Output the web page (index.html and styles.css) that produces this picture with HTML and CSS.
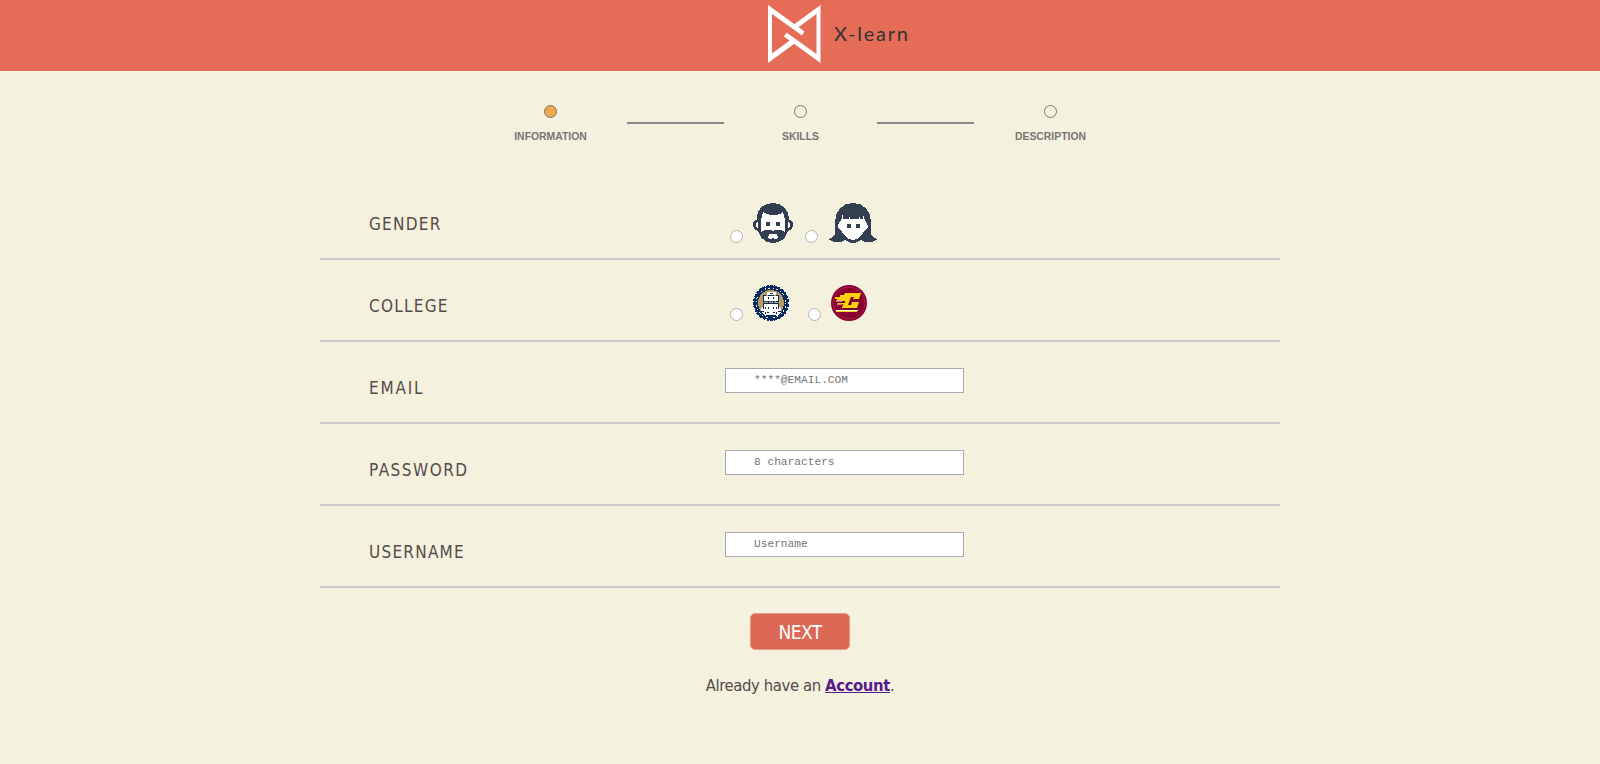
FILE: index.html
```html
<!DOCTYPE html>
<html lang="en">
<head>
<meta charset="utf-8">
<title>X-learn</title>
<link rel="stylesheet" href="styles.css">
</head>
<body>
<header class="header">
  <svg class="logo" width="54" height="58" viewBox="0 0 54 58">
    <path fill="#fff" d="M0 0L36.500 26.500L34 30.500L4 9V48.500L24.500 33.500L28 37.500L0 58ZM52.500 0V58L16 31.500L18.500 27.500L48.500 49V9L28 24L24.500 20.500Z"/>
  </svg>
  <span class="brand">X-learn</span>
</header>
<main class="page">
  <div class="steps">
    <div class="step"><i class="dot active"></i><span>INFORMATION</span></div>
    <i class="bar"></i>
    <div class="step"><i class="dot"></i><span>SKILLS</span></div>
    <i class="bar"></i>
    <div class="step"><i class="dot"></i><span>DESCRIPTION</span></div>
  </div>
  <form class="form">
    <div class="row">
      <span class="label gender">GENDER</span>
      <div class="choices people">
        <i class="radio"></i>
        <svg width="40" height="40" viewBox="0 0 40 40" shape-rendering="crispEdges">
          <path fill="#333e50" d="M20 0C29 0 35 6 36 15L36 17C39 17 40 19 40 22C39 26 38 27 35 28C33 35 28 40 20 40S7 35 5 28C2 27 1 26 0 22C0 19 1 17 4 17C3 7 10 0 20 0Z"/>
          <path fill="#fff" d="M10 9L14 11L20 12.500L27 11L30 9L32 17V29L28 27H22L20 28L18 27H12L8 29V17ZM5 19V26C2 24 2 20 5 19ZM35 19V26C38 24 38 20 35 19ZM16 31H24L25 35Q24 36 22 36L20 35L18 36Q16 36 15 35Z"/>
          <path fill="#333e50" d="M13 19h4v4h-4zM23 19h4v4h-4z"/>
        </svg>
        <i class="radio second"></i>
        <svg width="50" height="40" viewBox="0 0 50 40" shape-rendering="crispEdges">
          <path fill="#333e50" d="M25 0C36 0 43 8 43 19V31Q45 35 50 36Q41 42 33 37Q29 40 25 40T17 37Q9 42 0 36Q5 35 7 31V19C7 8 14 0 25 0Z"/>
          <path fill="#fff" d="M15 10V16H21V11L22 16H31L32 12V16H35V10L36 15L40 23Q39 27 37 27C34 33 30 37 25 37S16 33 13 27Q10 26 10 22L14 15Z"/>
          <path fill="#333e50" d="M19 21h4v4h-4zM28 21h4v4h-4z"/>
        </svg>
      </div>
    </div>
    <div class="row">
      <span class="label college">COLLEGE</span>
      <div class="choices schools">
        <i class="radio"></i>
        <svg width="36" height="36" viewBox="0 0 36 36" shape-rendering="crispEdges">
          <circle cx="18" cy="18" r="15.500" fill="#b99a64" stroke="#062c61" stroke-width="5"/>
          <circle cx="18" cy="18" r="15" fill="none" stroke="#f4f1df" stroke-dasharray="1 2 2 3"/>
          <circle cx="18" cy="18" r="17.500" fill="none" stroke="#f4f1df" stroke-dasharray="1 3"/>
          <path fill="#fff" d="M14 7h9v3h-2v1h4v5H10v-5h6v-1h-2zM11 18h14v3l3 2v4l-4 4H12l-4-4v-4l3-2z"/>
          <path stroke="#062c61" d="M17 8.500h3M10 10.500h3M15 10.500h6M23 10.500h3M10 16.500h3M14 16.500h2M17 16.500h2M20 16.500h2M23 16.500h3M10 18.500h16M8 26.500h3M14 27.500h2M20 27.500h2M25 26.500h3M13 30.500h10M10.500 11v5M25.500 11v5M10.500 19v5M25.500 19v5"/>
          <path stroke="#062c61" stroke-dasharray="2 3" d="M15.500 12v15M20.500 12v15M12.500 22v7M23.500 22v7"/>
        </svg>
        <i class="radio second"></i>
        <svg width="36" height="36" viewBox="0 0 36 36">
          <circle cx="18" cy="18" r="18" fill="#8b0030"/>
          <circle cx="18" cy="18" r="16" fill="none" stroke="#a01f49"/>
          <path fill="#5e101b" d="M14 9L31 9L29 15H24L25 12H21L18 21H22L23 18H29L27 24H12L14 20H7V15H4V13H12Z"/>
          <path fill="#ffcf0b" d="M14 8H30L28 14H22L23 12H20L17 20H20L21 17H28L26 23H11L12 19H7V18H14V16H6V14H4V12H9V10H13Z"/>
          <path stroke="#f0a083" stroke-width="1.500" d="M5 16H11M6 19H11"/>
          <path stroke="#fff" d="M5 25.500H27"/><path stroke="#ffcf0b" d="M5 26.500H26"/>
        </svg>
      </div>
    </div>
    <div class="row">
      <label class="label email" for="email">EMAIL</label>
      <input class="field" id="email" type="text" placeholder="****@EMAIL.COM">
    </div>
    <div class="row">
      <label class="label password" for="password">PASSWORD</label>
      <input class="field" id="password" type="password" placeholder="8 characters">
    </div>
    <div class="row">
      <label class="label username" for="username">USERNAME</label>
      <input class="field" id="username" type="text" placeholder="Username">
    </div>
    <button class="next" type="button">NEXT</button>
    <p class="signin">Already have an <a href="#">Account</a>.</p>
  </form>
</main>
</body>
</html>
```

FILE: styles.css
```css
* { box-sizing: border-box; }
body {
  margin: 0;
  min-height: 764px;
  background: #f4f1df;
  color: #554b48;
  font-family: "DejaVu Sans Condensed", "DejaVu Sans", sans-serif;
  font-stretch: condensed;
}
.header {
  height: 71px;
  padding: 5px 0 0 768px;
  display: flex;
  align-items: flex-start;
  background: #e56d57;
}
.logo { flex: none; }
.brand {
  margin: 15px 0 0 12px;
  font: 400 20px/26px Lato, sans-serif;
  letter-spacing: 1.7px;
  color: #333;
}
.steps {
  width: 654px;
  margin: 0 auto;
  padding: 34px 0 0 1px;
  height: 107px;
  display: flex;
  align-items: flex-start;
}
.step {
  width: 153px;
  display: flex;
  flex-direction: column;
  align-items: center;
  gap: 13px;
  font: bold 10.4px/12px "Liberation Sans", Arial, sans-serif;
  color: #777672;
}
.dot {
  width: 13px;
  height: 13px;
  border: 1px solid #777;
  border-radius: 50%;
}
.dot.active { background: #f1a94e; }
.bar { width: 97px; height: 2px; margin-top: 17px; background: #8a8788; }
.form {
  width: 960px;
  margin: 0 auto;
  display: flex;
  flex-direction: column;
  align-items: center;
}
.row {
  width: 100%;
  height: 82px;
  padding-left: 49px;
  display: grid;
  grid-template-columns: 356px 1fr;
  align-items: start;
  border-bottom: 2px solid #ccc;
}
.label { padding-top: 36px; font-size: 17px; line-height: 20px; letter-spacing: 1.25px; }
.email { letter-spacing: 1.8px; }
.password { letter-spacing: 1.5px; }
.choices { display: flex; align-items: flex-end; padding: 25px 0 0 5px; }
.choices svg { margin-left: 10px; }
.radio {
  width: 13px;
  height: 13px;
  border: 1px solid #b4b4b0;
  border-radius: 50%;
  background: #fff;
}
.people .second { margin-left: 12px; }
.schools .second { margin-left: 19px; }
.field {
  width: 239px;
  height: 25px;
  margin-top: 26px;
  padding: 0 10px 1px 28px;
  border: 1px solid #a9a9b2;
  background: #fff;
  font: 11.2px "Liberation Mono", "Courier New", monospace;
}
.field::placeholder { color: #757575; }
.next {
  width: 100px;
  height: 37px;
  margin-top: 25px;
  padding: 2px 0 0;
  border: 1px solid #e69b8a;
  border-radius: 5px;
  background: #da6854;
  color: #fff;
  font: condensed 19px/33px "DejaVu Sans Condensed", "DejaVu Sans", sans-serif;
  letter-spacing: -.6px;
}
.signin { margin: 26px 0 0; font-size: 16.500px; line-height: 20px; letter-spacing: -.38px; white-space: nowrap; }
.signin a { font-weight: bold; color: #551a8b; }
```
